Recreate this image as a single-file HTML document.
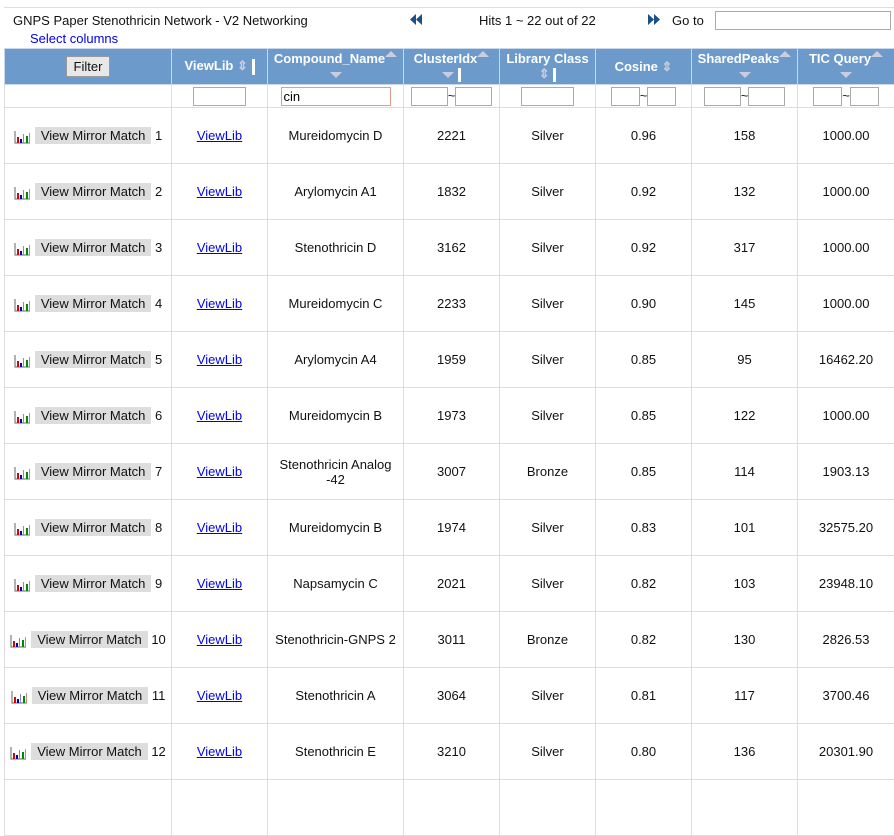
<!DOCTYPE html>
<html><head><style>
body{margin:0;width:894px;height:785px;overflow:hidden;background:#fff;font-family:"Liberation Sans",sans-serif;font-size:13px;color:#111;position:relative}
.top{position:absolute;left:4px;top:7px;width:890px;border-top:1px solid #ddd}
.t{position:absolute;font-size:13px}
table{position:absolute;left:4px;top:48px;border-collapse:collapse;table-layout:fixed;width:890px}
td,th{border:1px solid #ddd;padding:0;text-align:center;overflow:hidden;white-space:nowrap}
th{background:#6b9acb;color:#fff;font-weight:bold;height:33px;border-color:#c8d8ea;position:relative;line-height:15px}
tr.f td{height:22px}
tr.d td{height:55px}
input{box-sizing:border-box;height:19px;border:1px solid #aaa;padding:0 2px;font:13px "Liberation Sans",sans-serif;vertical-align:middle}
.btn{display:inline-block;background:#ddd;padding:1px 6px;color:#111}
a{color:#00e;text-decoration:underline}
.up{display:inline-block;border:6px solid transparent;border-bottom:6px solid #ccd;border-top:0;vertical-align:top}
.dn{display:inline-block;border:6px solid transparent;border-top:6px solid #ccd;border-bottom:0}
.bar{display:inline-block;width:3px;height:16px;background:#fff;vertical-align:middle}
.ic{display:inline-block;vertical-align:middle;margin-right:4px}
</style></head><body>
<div class="top"></div>
<div class="t" style="left:13px;top:13px">GNPS Paper Stenothricin Network - V2 Networking</div>
<div class="t" style="left:30px;top:31px;color:#00e">Select columns</div>
<svg style="position:absolute;left:410px;top:14px" width="12" height="11"><path d="M6 0L0 5.5 6 11ZM12 0L6 5.5 12 11Z" fill="#1a4f8a"/></svg>
<div class="t" style="left:479px;top:13px">Hits 1 ~ 22 out of 22</div>
<svg style="position:absolute;left:648px;top:14px" width="12" height="11"><path d="M0 0L6 5.5 0 11ZM6 0L12 5.5 6 11Z" fill="#1a4f8a"/></svg>
<div class="t" style="left:672px;top:13px">Go to</div>
<div style="position:absolute;left:715px;top:11px;width:176px;height:19px;border:1px solid #aaa;box-sizing:border-box"></div>
<table>
<colgroup><col style="width:167px"><col style="width:96px"><col style="width:136px"><col style="width:96px"><col style="width:96px"><col style="width:96px"><col style="width:106px"><col style="width:97px"></colgroup>
<tr>
<th><span style="display:inline-block;background:#e8e8e8;border:1px solid #999;color:#111;font-weight:normal;padding:2px 7px">Filter</span></th>
<th>ViewLib <span style="color:#ccd">⇕</span> <span class="bar"></span></th>
<th style="vertical-align:top;padding-top:2px">Compound_Name<span class="up"></span><br><span class="dn"></span></th>
<th style="vertical-align:top;padding-top:2px">ClusterIdx<span class="up"></span><br><span class="dn"></span> <span class="bar" style="height:14px"></span></th>
<th style="vertical-align:top;padding-top:2px">Library Class<br><span style="color:#ccd">⇕</span> <span class="bar" style="height:14px"></span></th>
<th>Cosine <span style="color:#ccd">⇕</span></th>
<th style="vertical-align:top;padding-top:2px">SharedPeaks<span class="up"></span><br><span class="dn"></span></th>
<th style="vertical-align:top;padding-top:2px">TIC Query<span class="up"></span><br><span class="dn"></span></th>
</tr>
<tr class="f">
<td></td>
<td><input style="width:53px"></td>
<td><input style="width:110px;border-color:#e89a8a" value="cin"></td>
<td><input style="width:37px">~<input style="width:37px"></td>
<td><input style="width:53px"></td>
<td><input style="width:29px">~<input style="width:29px"></td>
<td><input style="width:37px">~<input style="width:37px"></td>
<td><input style="width:29px">~<input style="width:29px"></td>
</tr>
<tbody id="b"></tbody>
</table>
<script>
var d=[["Mureidomycin D",2221,"Silver","0.96",158,"1000.00"],["Arylomycin A1",1832,"Silver","0.92",132,"1000.00"],["Stenothricin D",3162,"Silver","0.92",317,"1000.00"],["Mureidomycin C",2233,"Silver","0.90",145,"1000.00"],["Arylomycin A4",1959,"Silver","0.85",95,"16462.20"],["Mureidomycin B",1973,"Silver","0.85",122,"1000.00"],["Stenothricin Analog<br>-42",3007,"Bronze","0.85",114,"1903.13"],["Mureidomycin B",1974,"Silver","0.83",101,"32575.20"],["Napsamycin C",2021,"Silver","0.82",103,"23948.10"],["Stenothricin-GNPS 2",3011,"Bronze","0.82",130,"2826.53"],["Stenothricin A",3064,"Silver","0.81",117,"3700.46"],["Stenothricin E",3210,"Silver","0.80",136,"20301.90"],["","","","","",""]];
var ic='<svg class="ic" width="17" height="14" viewBox="0 0 17 14"><path d="M1 1V13H16" stroke="#666" fill="none"/><rect x="3" y="7" width="2" height="6" fill="#d00"/><rect x="6" y="9" width="2" height="4" fill="#00a"/><rect x="9" y="4" width="1" height="9" fill="#88c"/><rect x="12" y="6" width="2" height="7" fill="#080"/><rect x="15" y="3" width="1" height="10" fill="#c88"/></svg>';
var h="";d.forEach(function(r,i){var last=i==12;h+='<tr class="d"><td>'+(last?'':ic+'<span class="btn">View Mirror Match</span> '+(i+1))+'</td><td>'+(last?'':'<a>ViewLib</a>')+'</td><td>'+r[0]+'</td><td>'+r[1]+'</td><td>'+r[2]+'</td><td>'+r[3]+'</td><td>'+r[4]+'</td><td>'+r[5]+'</td></tr>';});
document.getElementById("b").innerHTML=h;
</script>
</body></html>
